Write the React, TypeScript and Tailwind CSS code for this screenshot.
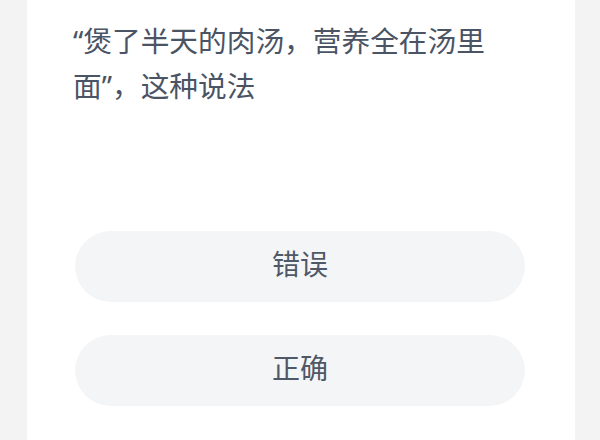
import React from 'react';

const options = ['错误', '正确'];

const App: React.FC = () => {
  return (
    <div
      className="w-[600px] h-[440px] overflow-hidden bg-[#f3f3f3] pl-[27px] pr-[25px]"
      style={{ fontFamily: '"Noto Sans", "Noto Sans CJK SC", sans-serif' }}
    >
      <div className="h-full bg-white pt-[18px]">
        <p className="ml-[46px] w-[430px] text-[28.7px] leading-[45px] text-[#4a5464]">
          “煲了半天的肉汤，营养全在汤里面”，这种说法
        </p>
        <div className="mt-[123px] pl-[48px] pr-[50px] flex flex-col gap-[33px]">
          {options.map((o) => (
            <button
              key={o}
              className="h-[71px] w-full rounded-full bg-[#f4f5f7] pb-[5px] text-[28px] text-[#4f5866] flex items-center justify-center"
            >
              {o}
            </button>
          ))}
        </div>
      </div>
    </div>
  );
};

export default App;
